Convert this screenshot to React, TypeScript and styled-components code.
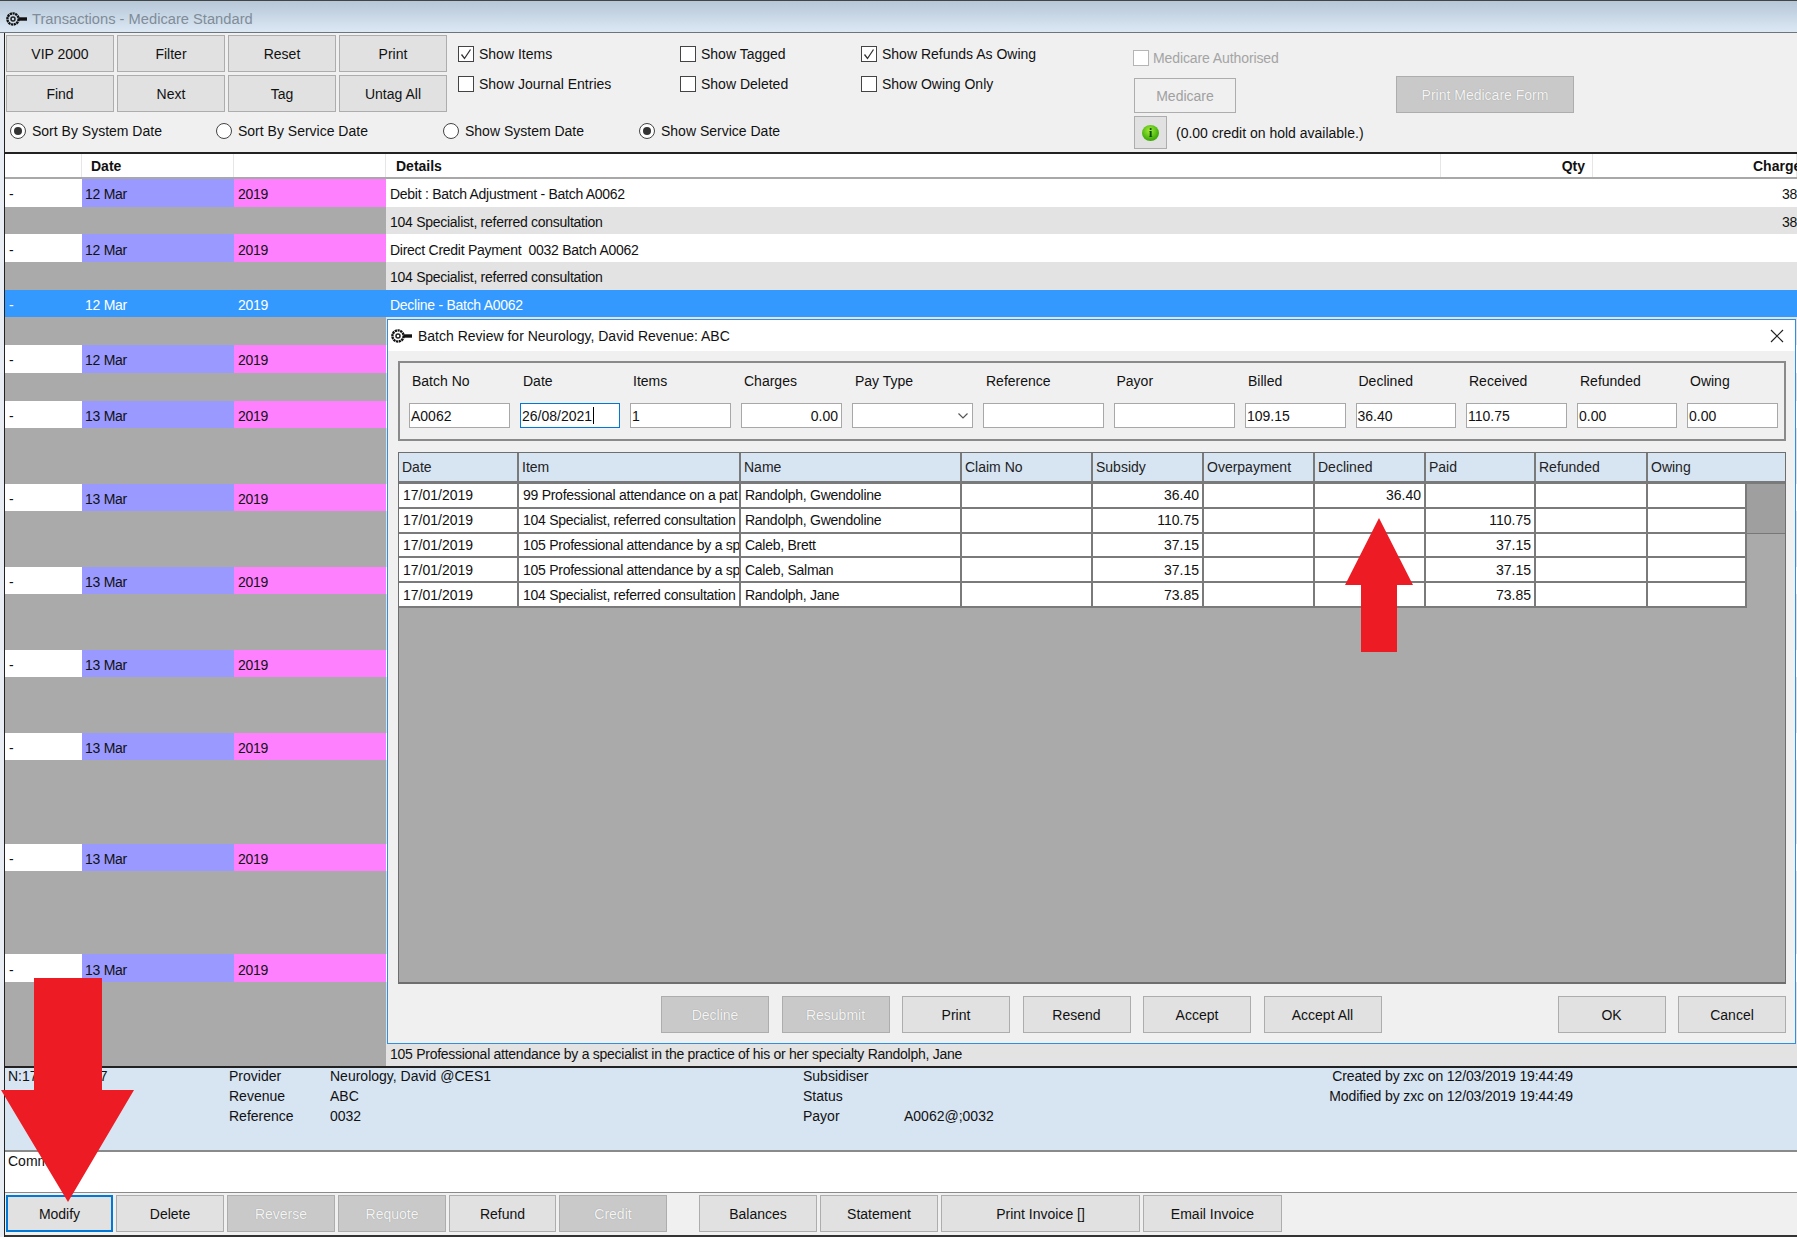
import styled, { createGlobalStyle } from 'styled-components';

const GlobalStyle = createGlobalStyle`
    html, body {
        margin: 0;
        padding: 0;
        overflow: hidden;
        background: #f0f0f0;
    }
    * {
        box-sizing: border-box;
    }
`;

const Page = styled.div`
    position: relative;
    width: 1797px;
    height: 1237px;
    overflow: hidden;
    display: flex;
    flex-direction: column;
    background: #e8eef4;
    color: #111;
    font-family: 'Liberation Sans', Arial, sans-serif;
    font-size: 14px;
`;

const TitleBar = styled.div`
    flex: none;
    height: 33px;
    display: flex;
    align-items: center;
    gap: 4px;
    padding: 4px 0 0 6px;
    border-top: 1px solid #444;
    border-bottom: 1px solid #6b7580;
    background: linear-gradient(#b6c7d8, #dce8f4);
    color: #808c98;
    font-size: 14.7px;
`;

const Frame = styled.div`
    flex: 1;
    min-height: 0;
    margin-left: 4px;
    border-left: 1px solid #222;
    display: flex;
    flex-direction: column;
`;

const Toolbar = styled.div`
    flex: none;
    height: 121px;
    display: grid;
    grid-template-columns: 453px 222px 181px 272px 263px 1fr;
    grid-template-rows: 82px 37px;
    border-bottom: 2px solid #222;
    background: #f0f0f0;
`;

const ButtonGrid = styled.div`
    display: grid;
    grid-template-columns: repeat(4, 108px);
    grid-auto-rows: 37px;
    gap: 3px;
    padding: 2px 0 0 1px;
`;

const Btn = styled.div<{ $w?: number; $h?: number; $state?: 'off' | 'ghost' | 'focus' }>`
    flex: none;
    width: ${(p) => (p.$w ? `${p.$w}px` : 'auto')};
    height: ${(p) => p.$h ?? 37}px;
    display: flex;
    align-items: center;
    justify-content: center;
    background: ${(p) => (p.$state === 'off' ? '#c9c9c9' : p.$state === 'ghost' ? '#f0f0f0' : '#e1e1e1')};
    border: ${(p) => (p.$state === 'focus' ? '2px solid #0078d7' : '1px solid #adadad')};
    color: ${(p) => (p.$state === 'off' ? '#f5f5f5' : p.$state === 'ghost' ? '#a0a0a0' : '#111')};
    text-shadow: ${(p) => (p.$state === 'off' ? '0 0 1px #8f8f8f' : 'none')};
`;

const CheckColumn = styled.div`
    padding-top: 6px;
    display: flex;
    flex-direction: column;
`;

const CheckRow = styled.div<{ $muted?: boolean }>`
    height: 30px;
    display: flex;
    align-items: center;
    gap: 5px;
    color: ${(p) => (p.$muted ? '#a4a4a4' : '#111')};
`;

const Box = styled.span<{ $muted?: boolean }>`
    flex: none;
    width: 16px;
    height: 16px;
    display: flex;
    align-items: center;
    justify-content: center;
    background: #fff;
    border: 1px solid ${(p) => (p.$muted ? '#b5b5b5' : '#444')};
`;

const RadioRow = styled.div`
    grid-column: 1 / span 4;
    display: flex;
    padding: 0 0 5px 5px;
`;

const RadioItem = styled.div<{ $w: number }>`
    width: ${(p) => p.$w}px;
    display: flex;
    align-items: center;
    gap: 6px;
`;

const RadioMark = styled.span<{ $on?: boolean }>`
    flex: none;
    width: 16px;
    height: 16px;
    display: flex;
    align-items: center;
    justify-content: center;
    border: 1px solid #444;
    border-radius: 50%;
    background: #fff;

    &::after {
        content: '';
        width: 8px;
        height: 8px;
        border-radius: 50%;
        background: ${(p) => (p.$on ? '#333' : 'transparent')};
    }
`;

const MedicareColumn = styled.div`
    grid-row: 1 / span 2;
    grid-column: 5;
    display: flex;
    flex-direction: column;
    padding-top: 17px;
`;

const AuthRow = styled.div`
    height: 16px;
    display: flex;
    align-items: center;
    gap: 4px;
    color: #a4a4a4;
    letter-spacing: -0.1px;
`;

const MedicareButton = styled(Btn)`
    margin: 12px 0 3px 1px;
`;

const InfoRow = styled.div`
    display: flex;
    align-items: center;
    gap: 9px;
    padding-left: 1px;
`;

const InfoButton = styled.div`
    width: 33px;
    height: 33px;
    display: flex;
    align-items: center;
    justify-content: center;
    background: #e1e1e1;
    border: 1px solid #adadad;
`;

const InfoDot = styled.span`
    width: 17px;
    height: 16px;
    display: flex;
    align-items: center;
    justify-content: center;
    border-radius: 50%;
    background: radial-gradient(circle at 45% 35%, #a4ee3c, #49b40c 60%, #2d8a08);
    color: #0b4a05;
    font-family: 'Liberation Serif', serif;
    font-size: 13px;
    font-weight: 700;
`;

const PrintColumn = styled.div`
    grid-row: 1 / span 2;
    grid-column: 6;
    padding-top: 43px;
`;

const ListColumns = '77px 152px 152px 1055px 152px 204px';

const ListHead = styled.div`
    flex: none;
    height: 25px;
    display: grid;
    grid-template-columns: ${ListColumns};
    background: #fff;
    border-bottom: 2px solid #a8a8a8;
    font-weight: 700;
`;

const HeadCell = styled.div<{ $right?: boolean; $pl?: number; $pr?: number }>`
    display: flex;
    align-items: center;
    justify-content: ${(p) => (p.$right ? 'flex-end' : 'flex-start')};
    padding-top: 1px;
    padding-left: ${(p) => p.$pl ?? 0}px;
    padding-right: ${(p) => p.$pr ?? 0}px;
    border-right: 1px solid #e6e6e6;
    white-space: nowrap;
`;

const ListBody = styled.div`
    position: relative;
    flex: 1;
    min-height: 0;
    display: flex;
    flex-direction: column;
`;

const Row = styled.div<{ $tail?: boolean }>`
    flex: ${(p) => (p.$tail ? '1' : 'none')};
    height: ${(p) => (p.$tail ? 'auto' : '27.7px')};
    display: grid;
    grid-template-columns: ${ListColumns};
`;

type Tone = 'white' | 'violet' | 'pink' | 'grey' | 'soft' | 'blue';

const toneColor: Record<Tone, string> = {
    white: '#fff',
    violet: '#9999ff',
    pink: '#ff80ff',
    grey: '#aaaaaa',
    soft: '#e3e3e3',
    blue: '#3399ff',
};

const Cell = styled.div<{ $tone: Tone; $right?: boolean; $pl?: number; $low?: boolean }>`
    display: flex;
    align-items: ${(p) => (p.$low ? 'flex-end' : 'center')};
    justify-content: ${(p) => (p.$right ? 'flex-end' : 'flex-start')};
    padding: ${(p) => (p.$low ? '0 0 4px' : '3px 0 0')};
    padding-left: ${(p) => p.$pl ?? 0}px;
    background: ${(p) => toneColor[p.$tone]};
    color: ${(p) => (p.$tone === 'blue' ? '#fff' : '#111')};
    white-space: pre;
    letter-spacing: -0.27px;
`;

const Dialog = styled.div`
    position: absolute;
    left: 382px;
    top: 140px;
    width: 1409px;
    height: 725px;
    display: flex;
    flex-direction: column;
    background: #f0f0f0;
    border: 1px solid #2f8fe0;
    z-index: 2;
`;

const DialogTitle = styled.div`
    flex: none;
    height: 31px;
    display: flex;
    align-items: center;
    gap: 5px;
    padding: 0 11px 0 3px;
    background: #fff;
`;

const CloseMark = styled.span`
    margin-left: auto;
    display: flex;
`;

const Group = styled.div`
    flex: none;
    height: 80px;
    margin: 10px 9px 0 10px;
    padding: 0 0 0 9px;
    display: flex;
    gap: 10px;
    border: 2px solid #8a8a8a;
`;

const Field = styled.div<{ $w: number }>`
    flex: none;
    width: ${(p) => p.$w}px;
    display: flex;
    flex-direction: column;
`;

const FieldLabel = styled.label`
    height: 36px;
    margin-bottom: 4px;
    padding-left: 3px;
    display: flex;
    align-items: center;
`;

const FieldBox = styled.div<{ $right?: boolean; $active?: boolean }>`
    height: 25px;
    display: flex;
    align-items: center;
    justify-content: ${(p) => (p.$right ? 'flex-end' : 'space-between')};
    padding: 0 3px 0 1px;
    background: #fff;
    border: 1px solid ${(p) => (p.$active ? '#0078d7' : '#a8a8a8')};
`;

const Caret = styled.span`
    display: inline-block;
    width: 1px;
    height: 17px;
    margin-left: 1px;
    background: #000;
`;

const TextFlow = styled.span`
    display: flex;
    align-items: center;
`;

const Sheet = styled.div`
    flex: 1;
    min-height: 0;
    margin: 11px 9px 0 10px;
    background: #aaaaaa;
    border: 1px solid #6e6e6e;
    border-bottom-width: 2px;
`;

const SheetColumns = '120px 222px 221px 131px 111px 111px 111px 110px 112px 99px 1fr';

const SheetHead = styled.div`
    height: 31px;
    display: grid;
    grid-template-columns: ${SheetColumns};
    background: #d7e4f2;
    border-bottom: 3px solid #7a7a7a;
    color: #222;
`;

const SheetHeadCell = styled.div`
    display: flex;
    align-items: center;
    padding-left: 3px;
    border-right: 2px solid #7a7a7a;

    &:last-child {
        grid-column: span 2;
        border-right: none;
    }
`;

const SheetRow = styled.div`
    height: 24.8px;
    display: grid;
    grid-template-columns: ${SheetColumns};
`;

const SheetCell = styled.div<{ $right?: boolean; $plain?: boolean }>`
    display: flex;
    align-items: center;
    justify-content: ${(p) => (p.$right ? 'flex-end' : 'flex-start')};
    padding: 0 3px 0 4px;
    overflow: hidden;
    white-space: nowrap;
    letter-spacing: ${(p) => (p.$plain ? '0' : '-0.27px')};
    background: #fff;
    border-right: 2px solid #7a7a7a;
    border-bottom: 2px solid #7a7a7a;
`;

const SheetFill = styled.div<{ $dark?: boolean; $line?: boolean }>`
    background: ${(p) => (p.$dark ? '#9f9f9f' : 'transparent')};
    border-bottom: 1px solid ${(p) => (p.$line ? '#777' : 'transparent')};
`;

const DialogFooter = styled.div`
    flex: none;
    height: 59px;
    display: flex;
    gap: 12.5px;
    padding: 12px 9px 0 273px;
`;

const FooterSpacer = styled.div`
    flex: 1;
`;

const InfoPanel = styled.div`
    flex: none;
    height: 86px;
    display: grid;
    grid-template-columns: 221px 101px 473px 101px 669px;
    grid-auto-rows: 20px;
    padding-left: 3px;
    background: #d7e4f2;
    border-top: 2px solid #222;
    border-bottom: 2px solid #8a8a8a;
`;

const InfoCell = styled.div<{ $right?: boolean }>`
    display: flex;
    align-items: center;
    justify-content: ${(p) => (p.$right ? 'flex-end' : 'flex-start')};
    padding-bottom: 4px;
    white-space: nowrap;
    letter-spacing: ${(p) => (p.$right ? '-0.12px' : '0')};
`;

const CommentBox = styled.div`
    flex: none;
    height: 41px;
    padding: 1px 0 0 3px;
    background: #fff;
    border-bottom: 1px solid #8a8a8a;
`;

const BottomBar = styled.div`
    flex: none;
    height: 44px;
    display: flex;
    padding: 2px 0 0 1px;
    background: #f0f0f0;
    border-bottom: 2px solid #333;
`;

const BottomGroup = styled.div<{ $gap: number; $mr?: number }>`
    display: flex;
    gap: ${(p) => p.$gap}px;
    margin-right: ${(p) => p.$mr ?? 0}px;
`;

const Arrow = styled.svg<{ $x: number; $y: number }>`
    position: absolute;
    left: ${(p) => p.$x}px;
    top: ${(p) => p.$y}px;
    z-index: 5;
`;

const KeyIcon = () => (
    <svg width="22" height="14" viewBox="0 0 22 14">
        <circle cx="7" cy="7" r="5.6" fill="none" stroke="#111" strokeWidth="2.4" strokeDasharray="2.2 0.6" />
        <circle cx="7" cy="7" r="2" fill="none" stroke="#222" strokeWidth="1.5" />
        <rect x="12.5" y="5.3" width="8.5" height="3.4" fill="#111" />
    </svg>
);

const Tick = () => (
    <svg width="14" height="14" viewBox="0 0 14 14">
        <path d="M2.5 7.5 L5.5 11.5 L11.5 2.5" fill="none" stroke="#333" strokeWidth="1.3" />
    </svg>
);

const Check = ({ label, on }: { label: string; on?: boolean }) => (
    <CheckRow>
        <Box>{on && <Tick />}</Box>
        {label}
    </CheckRow>
);

type ListRow =
    | { kind: 'main'; date: string; text?: string; charge?: string }
    | { kind: 'sub'; text?: string; charge?: string }
    | { kind: 'sel'; date: string; text: string };

const gap = (n: number): ListRow[] => Array.from({ length: n }, () => ({ kind: 'sub' }));

const listRows: ListRow[] = [
    { kind: 'main', date: '12 Mar', text: 'Debit : Batch Adjustment - Batch A0062', charge: '38' },
    { kind: 'sub', text: '104 Specialist, referred consultation', charge: '38' },
    { kind: 'main', date: '12 Mar', text: 'Direct Credit Payment  0032 Batch A0062' },
    { kind: 'sub', text: '104 Specialist, referred consultation' },
    { kind: 'sel', date: '12 Mar', text: 'Decline - Batch A0062' },
    ...gap(1),
    { kind: 'main', date: '12 Mar' },
    ...gap(1),
    { kind: 'main', date: '13 Mar' },
    ...gap(2),
    { kind: 'main', date: '13 Mar' },
    ...gap(2),
    { kind: 'main', date: '13 Mar' },
    ...gap(2),
    { kind: 'main', date: '13 Mar' },
    ...gap(2),
    { kind: 'main', date: '13 Mar' },
    ...gap(3),
    { kind: 'main', date: '13 Mar' },
    ...gap(3),
    { kind: 'main', date: '13 Mar' },
    ...gap(2),
];

const fields = [
    { label: 'Batch No', w: 101, value: 'A0062' },
    { label: 'Date', w: 100, value: '26/08/2021', active: true },
    { label: 'Items', w: 101, value: '1' },
    { label: 'Charges', w: 101, value: '0.00', right: true },
    { label: 'Pay Type', w: 121, value: '', select: true },
    { label: 'Reference', w: 120.5, value: '' },
    { label: 'Payor', w: 121.5, value: '' },
    { label: 'Billed', w: 100.5, value: '109.15' },
    { label: 'Declined', w: 100.5, value: '36.40' },
    { label: 'Received', w: 101, value: '110.75' },
    { label: 'Refunded', w: 100, value: '0.00' },
    { label: 'Owing', w: 91, value: '0.00' },
];

const sheetHead = ['Date', 'Item', 'Name', 'Claim No', 'Subsidy', 'Overpayment', 'Declined', 'Paid', 'Refunded', 'Owing'];

const sheetRows = [
    ['99 Professional attendance on a pat', 'Randolph, Gwendoline', '36.40', '36.40', ''],
    ['104 Specialist, referred consultation', 'Randolph, Gwendoline', '110.75', '', '110.75'],
    ['105 Professional attendance by a sp', 'Caleb, Brett', '37.15', '', '37.15'],
    ['105 Professional attendance by a sp', 'Caleb, Salman', '37.15', '', '37.15'],
    ['104 Specialist, referred consultation', 'Randolph, Jane', '73.85', '', '73.85'],
];

const App = () => {
    return (
        <Page>
            <GlobalStyle />
            <TitleBar>
                <KeyIcon />
                Transactions - Medicare Standard
            </TitleBar>
            <Frame>
                <Toolbar>
                    <ButtonGrid>
                        {['VIP 2000', 'Filter', 'Reset', 'Print', 'Find', 'Next', 'Tag', 'Untag All'].map((b) => (
                            <Btn key={b}>{b}</Btn>
                        ))}
                    </ButtonGrid>
                    <CheckColumn>
                        <Check label="Show Items" on />
                        <Check label="Show Journal Entries" />
                    </CheckColumn>
                    <CheckColumn>
                        <Check label="Show Tagged" />
                        <Check label="Show Deleted" />
                    </CheckColumn>
                    <CheckColumn>
                        <Check label="Show Refunds As Owing" on />
                        <Check label="Show Owing Only" />
                    </CheckColumn>
                    <MedicareColumn>
                        <AuthRow>
                            <Box $muted />
                            Medicare Authorised
                        </AuthRow>
                        <MedicareButton $w={102} $h={35} $state="ghost">
                            Medicare
                        </MedicareButton>
                        <InfoRow>
                            <InfoButton>
                                <InfoDot>i</InfoDot>
                            </InfoButton>
                            (0.00 credit on hold available.)
                        </InfoRow>
                    </MedicareColumn>
                    <PrintColumn>
                        <Btn $w={178} $state="off">
                            Print Medicare Form
                        </Btn>
                    </PrintColumn>
                    <RadioRow>
                        <RadioItem $w={206}>
                            <RadioMark $on />
                            Sort By System Date
                        </RadioItem>
                        <RadioItem $w={227}>
                            <RadioMark />
                            Sort By Service Date
                        </RadioItem>
                        <RadioItem $w={196}>
                            <RadioMark />
                            Show System Date
                        </RadioItem>
                        <RadioItem $w={200}>
                            <RadioMark $on />
                            Show Service Date
                        </RadioItem>
                    </RadioRow>
                </Toolbar>

                <ListHead>
                    <HeadCell />
                    <HeadCell $pl={9}>Date</HeadCell>
                    <HeadCell />
                    <HeadCell $pl={10}>Details</HeadCell>
                    <HeadCell $right $pr={7}>
                        Qty
                    </HeadCell>
                    <HeadCell $pl={160}>Charge</HeadCell>
                </ListHead>

                <ListBody>
                    {listRows.map((r, i) => {
                        const sel = r.kind === 'sel';
                        const main = r.kind === 'main';
                        const date = r.kind === 'sub' ? '' : r.date;
                        const charge = r.kind === 'sel' ? '' : r.charge;
                        return (
                            <Row key={i}>
                                <Cell $tone={sel ? 'blue' : main ? 'white' : 'grey'} $pl={4}>
                                    {date && '-'}
                                </Cell>
                                <Cell $tone={sel ? 'blue' : main ? 'violet' : 'grey'} $pl={3}>
                                    {date}
                                </Cell>
                                <Cell $tone={sel ? 'blue' : main ? 'pink' : 'grey'} $pl={4}>
                                    {date && '2019'}
                                </Cell>
                                <Cell $tone={sel ? 'blue' : main ? 'white' : 'soft'} $pl={4}>
                                    {r.text}
                                </Cell>
                                <Cell $tone={sel ? 'blue' : main ? 'white' : 'soft'} />
                                <Cell $tone={sel ? 'blue' : main ? 'white' : 'soft'} $right>
                                    {charge}
                                </Cell>
                            </Row>
                        );
                    })}
                    <Row $tail>
                        <Cell $tone="grey" />
                        <Cell $tone="grey" />
                        <Cell $tone="grey" />
                        <Cell $tone="soft" $pl={4} $low>
                            105 Professional attendance by a specialist in the practice of his or her specialty Randolph, Jane
                        </Cell>
                        <Cell $tone="soft" />
                        <Cell $tone="soft" />
                    </Row>

                    <Dialog>
                        <DialogTitle>
                            <KeyIcon />
                            Batch Review for Neurology, David Revenue: ABC
                            <CloseMark>
                                <svg width="14" height="14" viewBox="0 0 14 14">
                                    <path d="M1 1 L13 13 M13 1 L1 13" stroke="#222" strokeWidth="1.2" />
                                </svg>
                            </CloseMark>
                        </DialogTitle>
                        <Group>
                            {fields.map((f) => (
                                <Field key={f.label} $w={f.w}>
                                    <FieldLabel>{f.label}</FieldLabel>
                                    <FieldBox $right={f.right} $active={f.active}>
                                        <TextFlow>
                                            {f.value}
                                            {f.active && <Caret />}
                                        </TextFlow>
                                        {f.select && (
                                            <svg width="12" height="8" viewBox="0 0 12 8">
                                                <path d="M1.5 1.5 L6 6 L10.5 1.5" fill="none" stroke="#555" strokeWidth="1.2" />
                                            </svg>
                                        )}
                                    </FieldBox>
                                </Field>
                            ))}
                        </Group>
                        <Sheet>
                            <SheetHead>
                                {sheetHead.map((h) => (
                                    <SheetHeadCell key={h}>{h}</SheetHeadCell>
                                ))}
                            </SheetHead>
                            {sheetRows.map((r, i) => (
                                <SheetRow key={i}>
                                    <SheetCell $plain>17/01/2019</SheetCell>
                                    <SheetCell>{r[0]}</SheetCell>
                                    <SheetCell>{r[1]}</SheetCell>
                                    <SheetCell />
                                    <SheetCell $right $plain>{r[2]}</SheetCell>
                                    <SheetCell />
                                    <SheetCell $right $plain>{r[3]}</SheetCell>
                                    <SheetCell $right $plain>{r[4]}</SheetCell>
                                    <SheetCell />
                                    <SheetCell />
                                    <SheetFill $dark={i < 2} $line={i === 1} />
                                </SheetRow>
                            ))}
                        </Sheet>
                        <DialogFooter>
                            <Btn $w={108} $state="off">Decline</Btn>
                            <Btn $w={108} $state="off">Resubmit</Btn>
                            <Btn $w={108}>Print</Btn>
                            <Btn $w={108}>Resend</Btn>
                            <Btn $w={108}>Accept</Btn>
                            <Btn $w={118}>Accept All</Btn>
                            <FooterSpacer />
                            <Btn $w={108}>OK</Btn>
                            <Btn $w={108}>Cancel</Btn>
                        </DialogFooter>
                    </Dialog>
                </ListBody>

                <InfoPanel>
                    <InfoCell>N:17000000007</InfoCell>
                    <InfoCell>Provider</InfoCell>
                    <InfoCell>Neurology, David @CES1</InfoCell>
                    <InfoCell>Subsidiser</InfoCell>
                    <InfoCell $right>Created by zxc on 12/03/2019 19:44:49</InfoCell>

                    <InfoCell />
                    <InfoCell>Revenue</InfoCell>
                    <InfoCell>ABC</InfoCell>
                    <InfoCell>Status</InfoCell>
                    <InfoCell $right>Modified by zxc on 12/03/2019 19:44:49</InfoCell>

                    <InfoCell />
                    <InfoCell>Reference</InfoCell>
                    <InfoCell>0032</InfoCell>
                    <InfoCell>Payor</InfoCell>
                    <InfoCell>A0062@;0032</InfoCell>
                </InfoPanel>

                <CommentBox>Comment</CommentBox>

                <BottomBar>
                    <BottomGroup $gap={3} $mr={32}>
                        <Btn $w={107} $state="focus">Modify</Btn>
                        <Btn $w={108}>Delete</Btn>
                        <Btn $w={108} $state="off">Reverse</Btn>
                        <Btn $w={108} $state="off">Requote</Btn>
                        <Btn $w={107}>Refund</Btn>
                        <Btn $w={108} $state="off">Credit</Btn>
                    </BottomGroup>
                    <BottomGroup $gap={3}>
                        <Btn $w={118}>Balances</Btn>
                        <Btn $w={118}>Statement</Btn>
                        <Btn $w={199}>Print Invoice []</Btn>
                        <Btn $w={139}>Email Invoice</Btn>
                    </BottomGroup>
                </BottomBar>
            </Frame>

            <Arrow $x={1345} $y={518} width="68" height="134" viewBox="0 0 68 134">
                <path d="M34 0 L68 67 L52 67 L52 134 L16 134 L16 67 L0 67 Z" fill="#ed1c24" />
            </Arrow>
            <Arrow $x={1} $y={978} width="133" height="224" viewBox="0 0 133 224">
                <path d="M33 0 L101 0 L101 112 L133 112 L67 224 L0 112 L33 112 Z" fill="#ed1c24" />
            </Arrow>
        </Page>
    );
};

export default App;
